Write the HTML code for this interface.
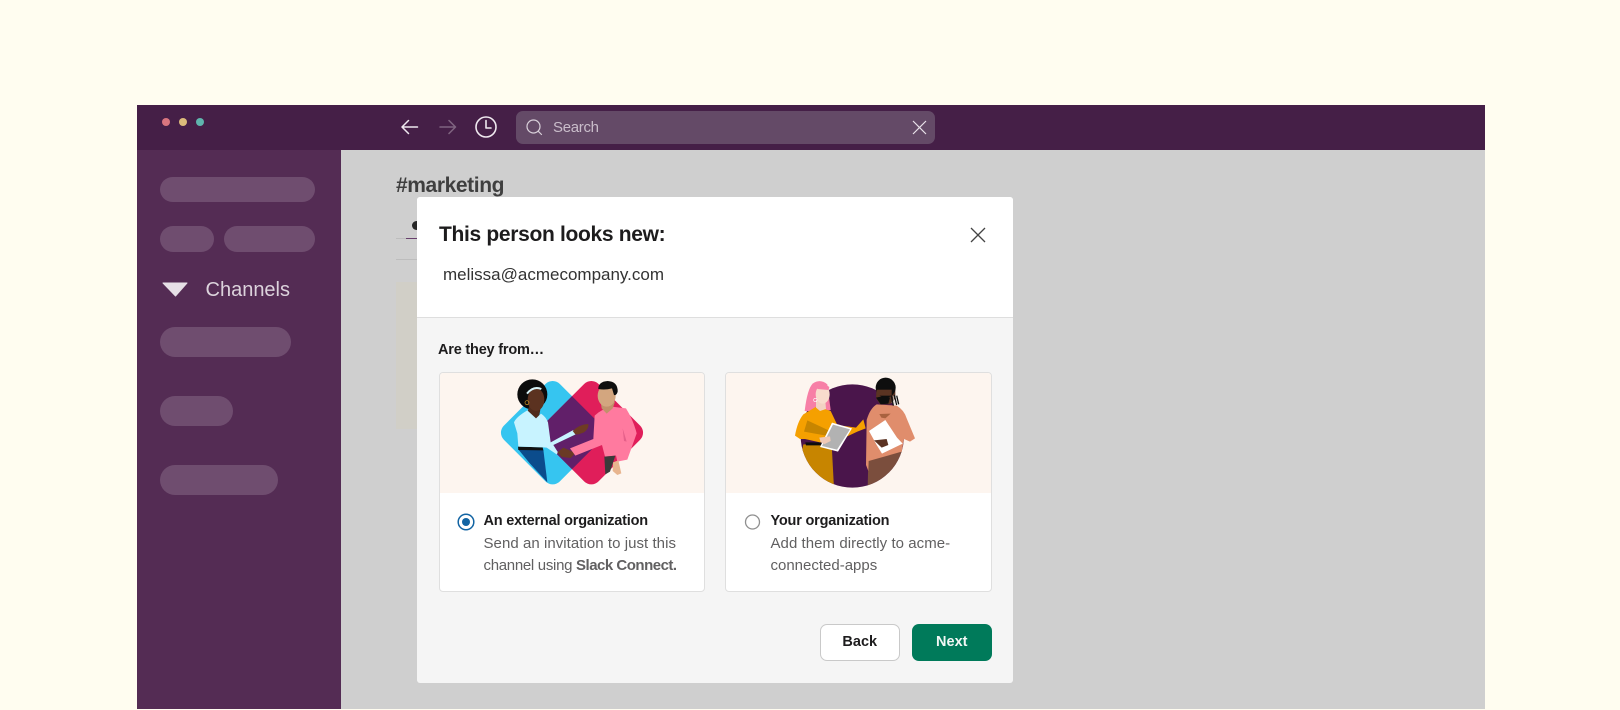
<!DOCTYPE html>
<html><head><meta charset="utf-8"><style>
*{margin:0;padding:0;box-sizing:border-box}
html,body{width:1620px;height:710px;overflow:hidden;background:#fffdf0;font-family:"Liberation Sans",sans-serif}
div,span.a,svg{position:absolute}
.t{white-space:nowrap;line-height:1}
.p{background:#6f4d6f;border-radius:15px}
</style></head><body>
<div style="left:136.500px;top:105px;width:1348.500px;height:604px;background:#cfcfcf"></div>
<div style="left:136.500px;top:105px;width:1348.500px;height:45px;background:#451f47"></div>
<div style="left:136.500px;top:150px;width:204.500px;height:559px;background:#542c54"></div>
<div style="left:161.500px;top:118px;width:8px;height:8px;border-radius:50%;background:#d9757f"></div>
<div style="left:178.500px;top:118px;width:8px;height:8px;border-radius:50%;background:#dcbb7b"></div>
<div style="left:195.500px;top:118px;width:8px;height:8px;border-radius:50%;background:#5fb5ad"></div>
<svg style="left:395px;top:110px" width="110" height="34" viewBox="395 110 110 34" fill="none" stroke-linecap="round" stroke-linejoin="round">
<path d="M402 127H417.500M408.500 120.500L402 127L408.500 133.500" stroke="#efe8ef" stroke-width="1.500"/>
<path d="M440 127H455.500M449 120.500L455.500 127L449 133.500" stroke="#7f6480" stroke-width="1.500"/>
<circle cx="486" cy="127" r="10" stroke="#efe8ef" stroke-width="1.600"/>
<path d="M486 120.500V128H491" stroke="#efe8ef" stroke-width="1.600"/>
</svg>
<div style="left:516px;top:110.500px;width:419px;height:33px;border-radius:7px;background:#644a67"></div>
<svg style="left:524px;top:117px" width="20" height="20" fill="none" stroke="#d8cfd9" stroke-width="1.200" stroke-linecap="round"><circle cx="9.500" cy="9.500" r="6.500"/><path d="M14.300 14.300L17.500 17.500"/></svg>
<div class="t" style="left:553px;top:120px;font-size:15px;color:#c9bdca;letter-spacing:-.3px">Search</div>
<svg style="left:912px;top:120px" width="15" height="15" fill="none" stroke="#e8e2e9" stroke-width="1.200"><path d="M1 1L14 14M14 1L1 14"/></svg>

<div class="p" style="left:160px;top:177px;width:155px;height:25px;border-radius:13px"></div>
<div class="p" style="left:160px;top:226px;width:54px;height:26px;border-radius:13px"></div>
<div class="p" style="left:224px;top:226px;width:91px;height:26px;border-radius:13px"></div>
<svg style="left:162px;top:282px" width="26" height="15"><path d="M1 1H25L13.500 14Z" fill="#e6dfe6" stroke="#e6dfe6" stroke-linejoin="round"/></svg>
<div class="t" style="left:205.500px;top:280px;font-size:20px;color:#dcd3dc">Channels</div>
<div class="p" style="left:160px;top:327px;width:131px;height:30px"></div>
<div class="p" style="left:160px;top:396px;width:72.500px;height:30px"></div>
<div class="p" style="left:160px;top:465px;width:118px;height:30px"></div>

<div class="t" style="left:396px;top:175px;font-size:21px;font-weight:bold;color:#3f3f3f;letter-spacing:-.4px">#marketing</div>
<div style="left:396px;top:238px;width:25px;height:1px;background:#bdbdbd"></div>
<div style="left:406px;top:237.500px;width:14px;height:1.500px;background:#68406c"></div>
<div style="left:412px;top:221px;width:9px;height:9px;border-radius:50%;background:#262626"></div>
<div style="left:396px;top:259px;width:25px;height:1px;background:#bdbdbd"></div>
<div style="left:396px;top:282px;width:25px;height:147px;background:#d1cfc7"></div>

<div style="left:417px;top:196.500px;width:596px;height:486px;background:#f5f5f5;border-radius:3px;overflow:hidden">
<div style="left:0;top:0;width:596px;height:121px;background:#fff;border-bottom:1px solid #dedede"></div>
</div>
<div class="t" style="left:439px;top:224px;font-size:21px;font-weight:bold;color:#1d1c1d;letter-spacing:-.32px">This person looks new:</div>
<svg style="left:970px;top:227px" width="16" height="16" fill="none" stroke="#444" stroke-width="1.300"><path d="M1 1L15 15M15 1L1 15"/></svg>
<div class="t" style="left:443px;top:266px;font-size:17px;color:#333">melissa@acmecompany.com</div>
<div class="t" style="left:438px;top:343px;font-size:14.500px;font-weight:bold;color:#1d1c1d;letter-spacing:-.2px">Are they from…</div>

<div style="left:439px;top:372px;width:266px;height:220px;background:#fff;border:1px solid #dfdfdf;border-radius:4px;overflow:hidden"><div style="left:0;top:0;width:264px;height:120px;background:#fdf5ef"></div></div>
<div style="left:725px;top:372px;width:266.500px;height:220px;background:#fff;border:1px solid #dfdfdf;border-radius:4px;overflow:hidden"><div style="left:0;top:0;width:265px;height:120px;background:#fdf5ef"></div></div>

<svg style="left:430px;top:365px" width="290" height="135" viewBox="0 0 870 405">
<defs><clipPath id="bd"><rect x="249.500" y="84.500" width="237" height="237" rx="30" transform="rotate(45 368 203)"/></clipPath></defs>
<rect x="249.500" y="84.500" width="237" height="237" rx="30" transform="rotate(45 368 203)" fill="#36c5f0"/>
<rect x="365.500" y="84.500" width="237" height="237" rx="30" transform="rotate(45 484 203)" fill="#e01e5a"/>
<g clip-path="url(#bd)"><rect x="365.500" y="84.500" width="237" height="237" rx="30" transform="rotate(45 484 203)" fill="#611f69"/></g>
<path d="M264 252L340 254L352 352L300 296Z" fill="#0b4c8c"/>
<path d="M264 245L338 247L340 256L265 255Z" fill="#111"/>
<circle cx="307" cy="88" r="45" fill="#0c0c0c"/>
<path d="M298 122L332 128L328 150L318 164L292 142Z" fill="#4f2b1c"/>
<ellipse cx="318" cy="104" rx="25" ry="34" fill="#5b3220"/>
<path d="M291 86Q310 62 334 72" fill="none" stroke="#d7f3f8" stroke-width="6"/>
<circle cx="291" cy="113" r="6" fill="none" stroke="#d49b1f" stroke-width="2"/>
<path d="M252 172Q258 156 292 136L318 160L333 146Q348 156 354 172L362 232L430 195L437 208L370 240L384 262L380 268L350 248L340 247L265 245L262 205Z" fill="#c8f3ff"/>
<path d="M428 198Q448 178 475 177Q478 190 462 202L445 208L436 208Z" fill="#6e3b24"/>
<path d="M382 262L400 248L436 264L422 279L395 276Z" fill="#6a3a25"/>
<path d="M420 250L490 222L494 152Q518 130 545 125L588 130Q610 165 620 205L592 284L562 290L558 272L525 275L516 240L436 272Z" fill="#ff7a9f"/>
<path d="M578 190L590 230L582 228Z" fill="#e5608a"/>
<path d="M523 275L556 272L540 320L526 328Z" fill="#3a3a3a"/>
<path d="M549 292L565 286L574 325L562 330L548 318Z" fill="#e8b58f"/>
<path d="M512 110L555 110L548 130L530 146L515 130Z" fill="#c1916b"/>
<ellipse cx="530" cy="92" rx="27" ry="33" fill="#d3a67f"/>
<path d="M505 75Q503 50 533 48Q564 50 563 80Q560 92 552 90L546 70Q525 76 505 72Z" fill="#0f0f0f"/>
</svg>

<svg style="left:720px;top:365px" width="290" height="135" viewBox="0 0 870 405">
<defs><clipPath id="cc"><circle cx="397" cy="213" r="155"/></clipPath></defs>
<circle cx="397" cy="213" r="155" fill="#4a154b"/>
<g clip-path="url(#cc)">
<path d="M250 238L335 238L342 370L220 370Z" fill="#c78500"/>
<path d="M445 280L545 250L560 370L443 370Z" fill="#7b4e3d"/>
</g>
<path d="M256 232L305 232L305 241L258 241Z" fill="#0d0d0d"/>
<path d="M254 138Q262 72 278 56Q300 40 322 58L332 135L300 140Z" fill="#f77fa6"/>
<path d="M225 212Q232 170 250 148L290 124L332 138L352 180L408 188L430 163L437 190L412 200L365 222L300 232L255 222L240 222Z" fill="#f5a000"/>
<path d="M262 166L326 196L318 212L252 200Z" fill="#c78500"/>
<path d="M288 105L316 108L318 132L300 138L288 128Z" fill="#f3d2c3"/>
<ellipse cx="308" cy="88" rx="21" ry="28" fill="#f8dccd"/>
<path d="M292 58Q310 52 328 66L326 75L292 72Z" fill="#f77fa6"/>
<circle cx="286" cy="105" r="5" fill="none" stroke="#fff" stroke-width="2"/>
<path d="M336 173L396 190L354 260L300 246Z" fill="#fff"/>
<path d="M339 179L390 193L351 254L306 243Z" fill="#b2b2b2"/>
<path d="M298 218L330 214L332 228L314 237L302 232Z" fill="#f0c9b6"/>
<path d="M440 165Q450 130 470 118L530 122Q552 135 560 160L585 220L570 230L552 222L545 260L446 288L445 318L438 300Z" fill="#e08d6c"/>
<path d="M478 147L512 146L496 160L484 158Z" fill="#a9623f"/>
<path d="M447 198L496 165L531 218L548 236L486 266L470 240Z" fill="#fff"/>
<path d="M462 226L500 222L505 240L485 248Z" fill="#5b3323"/>
<path d="M470 60L526 60L526 100L510 118L480 118L468 100Z" fill="#5a3322"/>
<circle cx="497" cy="68" r="30" fill="#0e0e0e"/>
<path d="M470 74L515 74L515 92L470 92Z" fill="#5a3322"/>
<path d="M468 98Q495 90 510 98L505 116L482 118Z" fill="#0e0e0e"/>
<path d="M514 92L520 122M523 90L530 120M530 92L536 118" stroke="#111" stroke-width="4"/>
<path d="M519 92L525 122M527 92L533 120" stroke="#ddd" stroke-width="2"/>
</svg>

<svg style="left:455px;top:511px" width="24" height="22"><circle cx="11" cy="11" r="7.800" fill="#fff" stroke="#1264a3" stroke-width="1.500"/><circle cx="11" cy="11" r="4" fill="#1264a3"/></svg>
<svg style="left:742px;top:511px" width="22" height="22"><circle cx="10.500" cy="11" r="7" fill="#fff" stroke="#8f8f8f" stroke-width="1.300"/></svg>

<div class="t" style="left:483.500px;top:514px;font-size:14.500px;font-weight:bold;color:#1d1c1d;letter-spacing:-.2px">An external organization</div>
<div class="t" style="left:483.500px;top:536px;font-size:15px;color:#616061;letter-spacing:.05px">Send an invitation to just this</div>
<div class="t" style="left:483.500px;top:558px;font-size:15px;color:#616061;letter-spacing:-.3px">channel using <b style="letter-spacing:-.5px">Slack Connect.</b></div>
<div class="t" style="left:770.500px;top:514px;font-size:14.500px;font-weight:bold;color:#1d1c1d;letter-spacing:-.2px">Your organization</div>
<div class="t" style="left:770.500px;top:536px;font-size:15px;color:#616061;letter-spacing:.05px">Add them directly to acme-</div>
<div class="t" style="left:770.500px;top:558px;font-size:15px;color:#616061">connected-apps</div>

<div class="t" style="left:819.500px;top:624px;width:80.500px;height:37px;border:1.500px solid #c9c9c9;border-radius:7px;background:#fff;text-align:center;line-height:35px;font-size:14.500px;font-weight:bold;color:#1d1c1d">Back</div>
<div class="t" style="left:911.500px;top:624px;width:80.500px;height:37px;border-radius:7px;background:#007a5a;text-align:center;line-height:37px;font-size:14.500px;font-weight:bold;color:#f2f7f5">Next</div>
</body></html>
